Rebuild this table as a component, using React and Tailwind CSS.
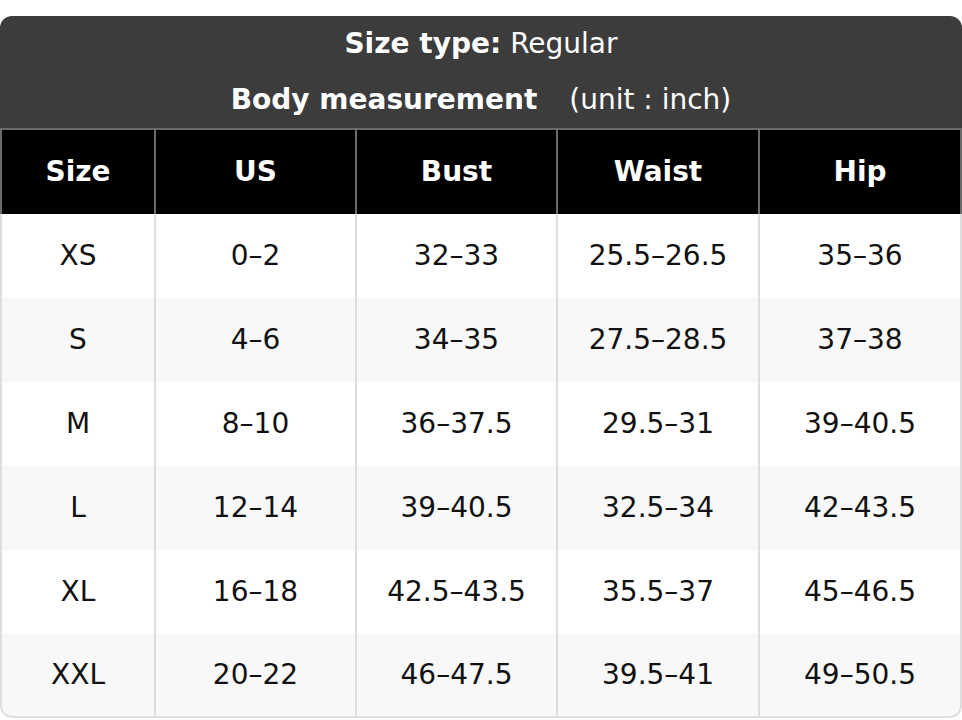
import React from 'react';

// size chart rows: size, US, bust, waist, hip
const rows = [
  ['XS', '0–2', '32–33', '25.5–26.5', '35–36'],
  ['S', '4–6', '34–35', '27.5–28.5', '37–38'],
  ['M', '8–10', '36–37.5', '29.5–31', '39–40.5'],
  ['L', '12–14', '39–40.5', '32.5–34', '42–43.5'],
  ['XL', '16–18', '42.5–43.5', '35.5–37', '45–46.5'],
  ['XXL', '20–22', '46–47.5', '39.5–41', '49–50.5'],
];

const headers = ['Size', 'US', 'Bust', 'Waist', 'Hip'];

const cols = 'grid grid-cols-[152px_201px_201px_202px_1fr]';

export default function App() {
  return (
    <div className="min-h-screen bg-white pt-[16px] font-['DejaVu_Sans',sans-serif]">
      <div className="rounded-[12px] overflow-hidden">
        {/* title block */}
        <div className="bg-[#3c3c3c] text-white text-[28px]">
          <div className="h-[56px] flex items-center justify-center">
            <span className="font-bold">Size type:</span>
            <span className="ml-[9px]">Regular</span>
          </div>
          <div className="h-[56px] flex items-center justify-center">
            <span className="font-bold">Body measurement</span>
            <span className="ml-[32px]">(unit : inch)</span>
          </div>
        </div>

        {/* column headers */}
        <div className={`${cols} bg-black text-white font-bold text-[28px] h-[86px] border-t-2 border-x-2 border-[#6a6a6a]`}>
          {headers.map((h, i) => (
            <div
              key={h}
              className={`flex items-center justify-center ${i > 0 ? 'border-l-2 border-[#6a6a6a]' : ''}`}
            >
              {h}
            </div>
          ))}
        </div>

        {/* body */}
        {rows.map((r, ri) => (
          <div
            key={r[0]}
            className={`${cols} h-[84px] border-x-2 border-[#dedede] text-[28px] text-[#111] ${
              ri % 2 === 1 ? 'bg-[#f8f8f8]' : 'bg-white'
            } ${ri === rows.length - 1 ? 'border-b-2 rounded-b-[12px] h-[82px]' : ''}`}
          >
            {r.map((c, ci) => (
              <div
                key={ci}
                className={`flex items-center justify-center ${ci > 0 ? 'border-l-2 border-[#dedede]' : ''}`}
              >
                {c}
              </div>
            ))}
          </div>
        ))}
      </div>
    </div>
  );
}
